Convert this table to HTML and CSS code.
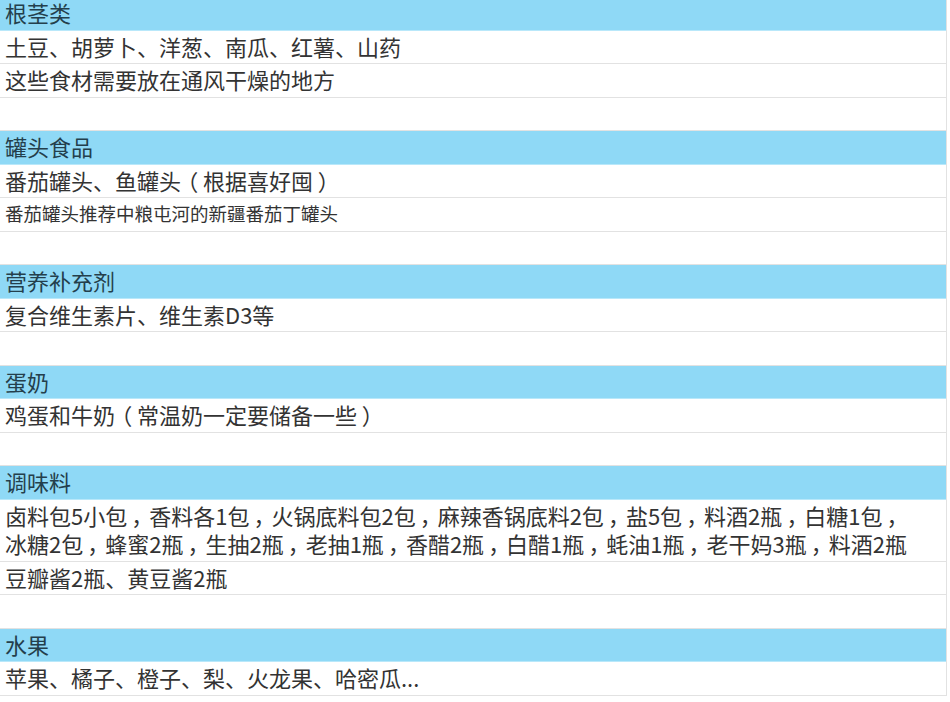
FILE: index.html
```html
<!DOCTYPE html>
<html lang="zh-CN">
<head>
<meta charset="utf-8">
<title>储备清单</title>
<link rel="stylesheet" href="styles.css">
</head>
<body>
<div class="sheet">
  <div class="row head">根茎类</div>
  <div class="row">土豆、胡萝卜、洋葱、南瓜、红薯、山药</div>
  <div class="row">这些食材需要放在通风干燥的地方</div>
  <div class="row empty">&nbsp;</div>

  <div class="row head">罐头食品</div>
  <div class="row">番茄罐头、鱼罐头<span class="fw">（</span>根据喜好囤<span class="fw">）</span></div>
  <div class="row small">番茄罐头推荐中粮屯河的新疆番茄丁罐头</div>
  <div class="row empty">&nbsp;</div>

  <div class="row head">营养补充剂</div>
  <div class="row">复合维生素片、维生素D3等</div>
  <div class="row empty">&nbsp;</div>

  <div class="row head">蛋奶</div>
  <div class="row">鸡蛋和牛奶<span class="fw">（</span>常温奶一定要储备一些<span class="fw">）</span></div>
  <div class="row empty">&nbsp;</div>

  <div class="row head">调味料</div>
  <div class="row">卤料包5小包<span class="fw">，</span>香料各1包<span class="fw">，</span>火锅底料包2包<span class="fw">，</span>麻辣香锅底料2包<span class="fw">，</span>盐5包<span class="fw">，</span>料酒2瓶<span class="fw">，</span>白糖1包<span class="fw">，</span><br>冰糖2包<span class="fw">，</span>蜂蜜2瓶<span class="fw">，</span>生抽2瓶<span class="fw">，</span>老抽1瓶<span class="fw">，</span>香醋2瓶<span class="fw">，</span>白醋1瓶<span class="fw">，</span>蚝油1瓶<span class="fw">，</span>老干妈3瓶<span class="fw">，</span>料酒2瓶</div>
  <div class="row">豆瓣酱2瓶、黄豆酱2瓶</div>
  <div class="row empty">&nbsp;</div>

  <div class="row head">水果</div>
  <div class="row">苹果、橘子、橙子、梨、火龙果、哈密瓜...</div>
</div>
</body>
</html>
```

FILE: styles.css
```css
html, body {
  margin: 0;
  padding: 0;
  background: #ffffff;
}

body {
  font-family: "Noto Sans CJK SC", "Noto Sans", "Liberation Sans", sans-serif;
  color: #333333;
  overflow: hidden;
}

.sheet {
  width: 946px;
  margin-top: -3px;
  border-right: 1px solid #e2e2e2;
}

.row {
  font-size: 22px;
  line-height: 28.5px;
  padding: 1px 4px 3px 5px;
  border-bottom: 1px solid #e2e2e2;
  white-space: nowrap;
  overflow: hidden;
}

.row.head {
  background: #8fd9f6;
  color: #243f4c;
  border-bottom-color: #b9e8fa;
}

.row.small {
  font-size: 18.5px;
}

.fw {
  display: inline-block;
  width: 1em;
  line-height: 22px;
  text-align: center;
  font-feature-settings: "palt" 1;
}
```
